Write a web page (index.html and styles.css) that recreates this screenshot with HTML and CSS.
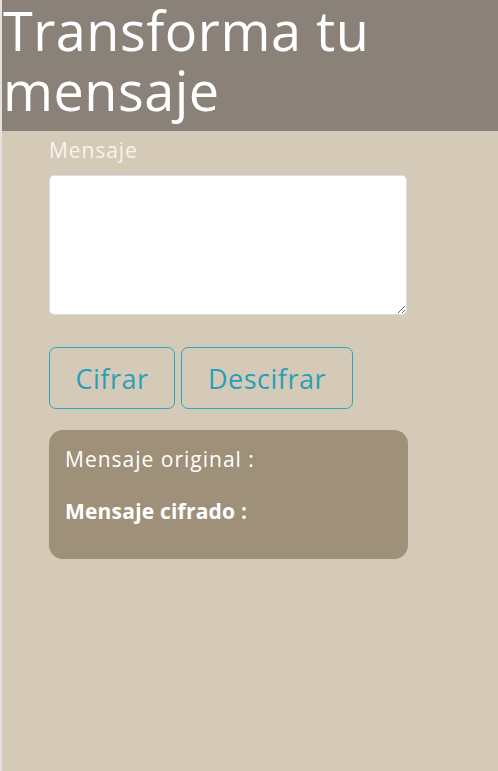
FILE: index.html
```html
<!DOCTYPE html>
<html lang="es">
<head>
<meta charset="utf-8">
<title>Transforma tu mensaje</title>
<link rel="stylesheet" href="styles.css">
</head>
<body>
<div class="page">
  <header class="header">
    <h1 class="title">Transforma tu mensaje</h1>
  </header>
  <main class="main">
    <label class="label" for="msg">Mensaje</label>
    <textarea class="input" id="msg"></textarea>
    <div class="actions">
      <button class="btn btn-cifrar">Cifrar</button>
      <button class="btn btn-descifrar">Descifrar</button>
    </div>
    <section class="result">
      <p class="result-line">Mensaje original :</p>
      <p class="result-line result-bold">Mensaje cifrado :</p>
    </section>
  </main>
</div>
</body>
</html>
```
FILE: styles.css
```css
html, body {
  margin: 0;
  padding: 0;
  height: 100%;
}
body {
  background: #d5cab8;
  font-family: "Open Sans", "Noto Sans", sans-serif;
}
.page {
  min-height: 100%;
  border-left: 2px solid #e4e2df;
  box-sizing: border-box;
}
.header {
  background: #8a8279;
  height: 131px;
  padding: 0 0 0 1px;
  box-sizing: border-box;
}
.title {
  margin: 0;
  font-weight: 400;
  font-size: 54px;
  line-height: 60px;
  letter-spacing: 0.5px;
  color: #ffffff;
  width: 440px;
}
.main {
  padding: 5px 0 0 47px;
  display: flex;
  flex-direction: column;
  align-items: flex-start;
}
.label {
  font-size: 21px;
  line-height: 28px;
  letter-spacing: 0.9px;
  color: #f8f4ec;
}
.input {
  margin-top: 11px;
  width: 358px;
  height: 140px;
  box-sizing: border-box;
  border: 1px solid #d9dde6;
  border-radius: 5px;
  background: #ffffff;
  resize: vertical;
}
.actions {
  margin-top: 32px;
  display: flex;
  gap: 6px;
}
.btn {
  height: 62px;
  box-sizing: border-box;
  border: 1.5px solid #2aa7c0;
  border-radius: 7px;
  background: transparent;
  color: #2a9fb9;
  font-family: inherit;
  font-size: 27px;
  letter-spacing: 0.5px;
  padding: 0;
}
.btn-cifrar { width: 126px; }
.btn-descifrar { width: 172px; }
.result {
  margin-top: 21px;
  width: 359px;
  height: 129px;
  box-sizing: border-box;
  background: #9f907a;
  border-radius: 14px;
  padding: 15px 16px;
}
.result-line {
  margin: 0;
  font-size: 21px;
  line-height: 28px;
  letter-spacing: 1px;
  color: #ffffff;
}
.result-bold {
  font-weight: 700;
  letter-spacing: 0.2px;
  margin-top: 24px;
}
```
